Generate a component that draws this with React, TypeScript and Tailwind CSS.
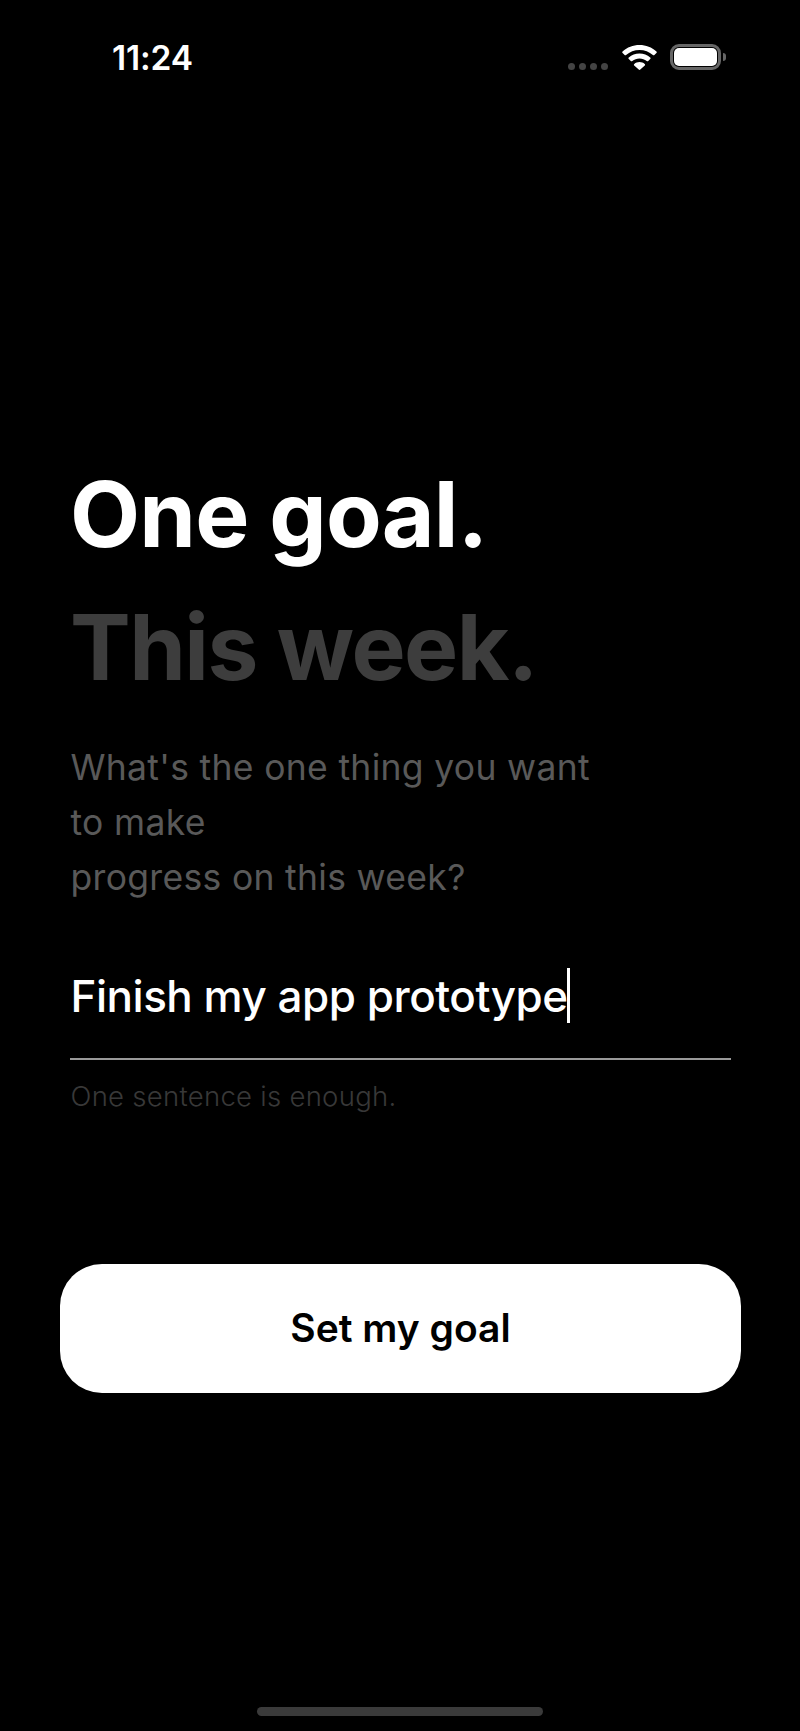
export default function App() {
  return (
    <div className="relative flex h-[1731px] w-[800px] flex-col overflow-hidden bg-black font-['Inter',sans-serif]">
      <div className="flex h-[44px] items-start justify-between pl-[112px] pr-[74px] mt-[44px]">
        <span className="text-[33.5px] leading-[28px] font-semibold text-white tracking-[-0.005em]">11:24</span>
        <div className="flex items-start">
          <div className="mt-[19px] flex gap-[4px]">
            <span className="h-[7px] w-[7px] rounded-full bg-[#444]" />
            <span className="h-[7px] w-[7px] rounded-full bg-[#444]" />
            <span className="h-[7px] w-[7px] rounded-full bg-[#444]" />
            <span className="h-[7px] w-[7px] rounded-full bg-[#444]" />
          </div>
          <svg className="ml-[14px] mt-[1px]" width="35" height="25" viewBox="0 0 35 25" fill="#fff">
            <path d="M17.5 0C11 0 5.2 2.4 0.6 6.4c-.5.4-.5 1.1 0 1.6l2 2c.4.4 1.1.4 1.5 0C7.7 6.9 12.4 5 17.5 5s9.8 1.9 13.4 5c.4.4 1.1.4 1.5 0l2-2c.5-.5.5-1.2 0-1.6C29.8 2.4 24 0 17.5 0z" />
            <path d="M17.5 8.5c-4.1 0-7.8 1.5-10.7 4-.5.4-.5 1.1 0 1.5l2 2c.4.4 1 .4 1.5.1 2-1.6 4.5-2.5 7.2-2.5s5.2.9 7.2 2.5c.5.3 1.1.3 1.5-.1l2-2c.5-.4.5-1.1 0-1.5-2.9-2.5-6.6-4-10.7-4z" />
            <path d="M17.5 17c-2 0-3.8.7-5.2 1.9-.5.4-.5 1.1-.1 1.5l4.5 4.2c.4.4 1.2.4 1.6 0l4.5-4.2c.4-.4.4-1.1-.1-1.5C21.3 17.7 19.5 17 17.5 17z" />
          </svg>
          <div className="ml-[13px] flex items-center">
            <div className="h-[26px] w-[51px] rounded-[9px] border-[3px] border-[#666] p-[1px]">
              <div className="h-full w-full rounded-[5px] bg-white" />
            </div>
            <div className="ml-[1.5px] h-[8px] w-[3.5px] rounded-r-[3px] bg-[#666]" />
          </div>
        </div>
      </div>

      <main className="flex flex-1 flex-col px-[70px]">
        <h1 className="mt-[360px] text-[91px] leading-[133px] font-bold tracking-[-0.009em] text-white">
          One goal.
          <br />
          <span className="tracking-[-0.017em] text-[#3d3d3d]">This week.</span>
        </h1>
        <p className="mt-[25.5px] ml-[0.5px] text-[35.5px] leading-[55px] font-normal tracking-[0.009em] text-[#595959]">
          What's the one thing you want
          <br />
          to make
          <br />
          progress on this week?
        </p>
        <div className="mt-[55px] flex h-[72px] items-center ml-[0.5px]">
          <span className="text-[44px] leading-[56px] font-medium tracking-[-0.011em] text-white">Finish my app prototype</span>
          <span className="-ml-[1px] h-[55px] w-[3.5px] bg-white" />
        </div>
        <div className="mt-[26.5px] h-[2px] w-[661px] bg-[#999]" />
        <p className="mt-[18px] ml-[0.5px] text-[27.5px] leading-[36px] font-light tracking-[0.01em] text-[#383838]">One sentence is enough.</p>
        <button className="-ml-[10px] mt-[150px] flex h-[129px] w-[681px] items-center justify-center rounded-[42px] bg-white text-[39px] font-semibold text-black">
          Set my goal
        </button>
      </main>

      <div className="absolute bottom-[15px] left-[257px] h-[9px] w-[286px] rounded-full bg-[#3a3a3a]" />
    </div>
  );
}
